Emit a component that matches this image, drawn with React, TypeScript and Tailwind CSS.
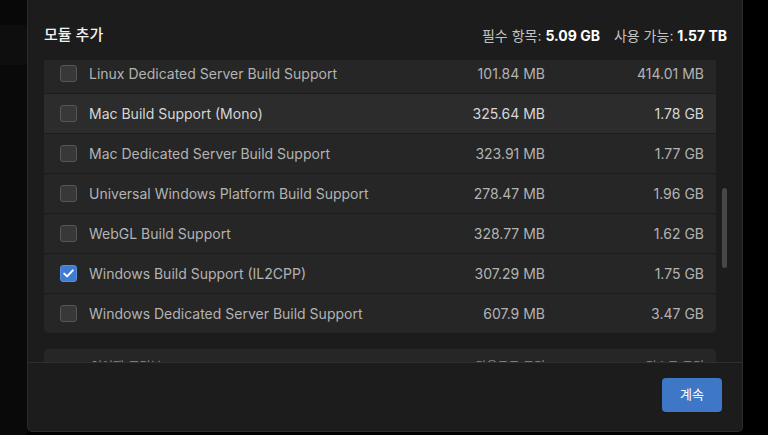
import React from 'react';

type Module = { name: string; download: string; disk: string; checked?: boolean; hover?: boolean };

const modules: Module[] = [
  { name: 'Linux Dedicated Server Build Support', download: '101.84 MB', disk: '414.01 MB' },
  { name: 'Mac Build Support (Mono)', download: '325.64 MB', disk: '1.78 GB', hover: true },
  { name: 'Mac Dedicated Server Build Support', download: '323.91 MB', disk: '1.77 GB' },
  { name: 'Universal Windows Platform Build Support', download: '278.47 MB', disk: '1.96 GB' },
  { name: 'WebGL Build Support', download: '328.77 MB', disk: '1.62 GB' },
  { name: 'Windows Build Support (IL2CPP)', download: '307.29 MB', disk: '1.75 GB', checked: true },
  { name: 'Windows Dedicated Server Build Support', download: '607.9 MB', disk: '3.47 GB' },
];

const Checkbox: React.FC<{ checked?: boolean }> = ({ checked }) =>
  checked ? (
    <div className="w-[17px] h-[17px] rounded-[3px] bg-[#3f7bd2] border border-[#5a8fdc] flex items-center justify-center">
      <svg width="11" height="9" viewBox="0 0 11 9" fill="none">
        <path d="M1.2 4.6 L4.1 7.4 L9.8 1.4" stroke="white" strokeWidth="2" strokeLinecap="round" strokeLinejoin="round" />
      </svg>
    </div>
  ) : (
    <div className="w-[17px] h-[17px] rounded-[3px] bg-[#383838] border border-[#565656]" />
  );

export default function App() {
  return (
    <div
      className="w-[768px] h-[435px] flex bg-black overflow-hidden"
      style={{ fontFamily: 'Inter, "Noto Sans CJK KR", "Noto Sans", sans-serif' }}
    >
      {/* backdrop strip on the left */}
      <div className="w-[27px] flex flex-col">
        <div className="h-[25px] bg-[#080808]" />
        <div className="h-[40px] bg-[#0e0e0e]" />
        <div className="flex-1 bg-[#090909]" />
      </div>

      {/* dialog */}
      <div className="w-[716px] h-[432px] flex flex-col bg-[#1c1c1c] border-x border-b border-[#2c2c2c] rounded-b-[5px] overflow-hidden">
        <div className="h-[60px] flex items-center justify-between pl-4 pr-[15px] pt-[10px]">
          <span className="text-[15px] font-medium text-[#f2f2f2]">모듈 추가</span>
          <span className="text-[14px] text-[#c2c2c2]">
            필수 항목: <b className="font-bold text-white">5.09 GB</b>
            <span className="ml-[14px]">사용 가능: </span>
            <b className="font-bold text-white">1.57 TB</b>
          </span>
        </div>

        <div className="h-[302px] flex pl-4 overflow-hidden">
          <div className="w-[672px] -mt-[7px]">
            <div className="rounded-[5px] overflow-hidden">
              {modules.map((m, i) => (
                <div
                  key={m.name}
                  className={`h-[40px] flex items-center pl-[16px] pr-3 text-[14px] ${
                    i > 0 ? 'border-t border-[#1d1d1d]' : ''
                  } ${m.hover ? 'bg-[#2c2c2c] text-[#d6d6d6]' : 'bg-[#262626] text-[#b3b3b3]'}`}
                >
                  <Checkbox checked={m.checked} />
                  <span className="ml-[12px] flex-1">{m.name}</span>
                  <span className="w-[120px] text-right">{m.download}</span>
                  <span className="w-[159px] text-right">{m.disk}</span>
                </div>
              ))}
            </div>

            <div className="mt-4 h-[40px] rounded-t-[5px] bg-[#262626] flex items-start pt-[9px] pl-[47px] pr-3 text-[12px] text-[#8c8c8c]">
              <span className="flex-1">언어팩(프리뷰)</span>
              <span className="w-[120px] text-right">다운로드 크기</span>
              <span className="w-[159px] text-right">디스크 크기</span>
            </div>
          </div>

          <div className="ml-[6px] w-[5px]">
            <div className="mt-[128px] h-[80px] rounded-full bg-[#474747]" />
          </div>
        </div>

        <div className="flex-1 border-t border-[#2f2f2f] flex justify-end items-start pt-[15px] pr-[20px]">
          <button className="w-[60px] h-[34px] rounded-[4px] bg-[#3d77c5] text-white text-[13px]">계속</button>
        </div>
      </div>

      <div className="flex-1 bg-black" />
    </div>
  );
}
